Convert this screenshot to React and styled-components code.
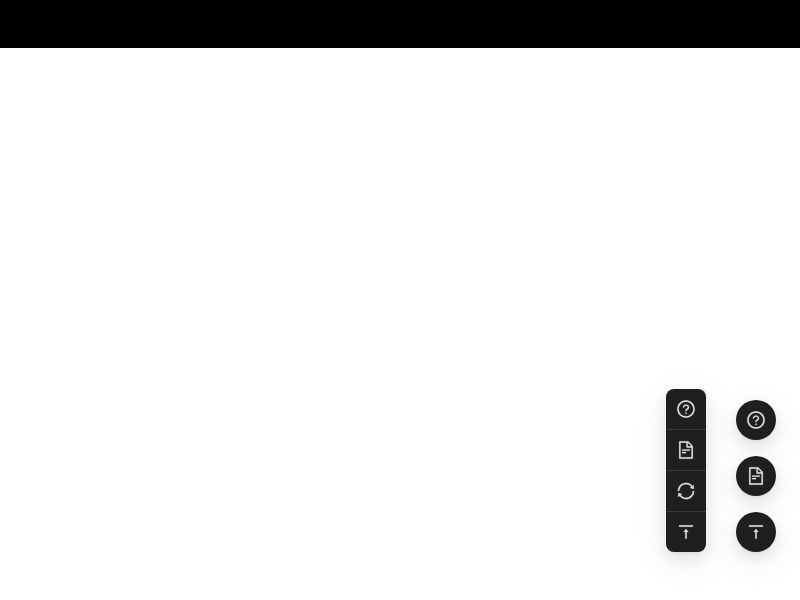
import React from 'react';
import styled, { createGlobalStyle } from 'styled-components';
import { AiOutlineQuestionCircle, AiOutlineFileText, AiOutlineSync, AiOutlineVerticalAlignTop } from 'react-icons/ai';

const Global = createGlobalStyle`
  html, body { margin: 0; padding: 0; background: #fff; font-family: "Liberation Sans", sans-serif; }
  #root { min-height: 100vh; }
`;

const shadow = '0 6px 16px 0 rgba(0,0,0,.08), 0 3px 6px -4px rgba(0,0,0,.12), 0 9px 28px 8px rgba(0,0,0,.05)';

const TopBar = styled.header`
  height: 48px;
  background: #000;
`;

const FloatDock = styled.div`
  position: fixed;
  right: 24px;
  bottom: 48px;
  display: flex;
  align-items: flex-end;
  gap: 30px;
`;

const SquareGroup = styled.div`
  display: flex;
  flex-direction: column;
  width: 40px;
  border-radius: 8px;
  background: #1f1f1f;
  box-shadow: ${shadow};
  overflow: hidden;
`;

const SquareButton = styled.button`
  display: flex;
  align-items: center;
  justify-content: center;
  width: 40px;
  height: 40px;
  padding: 0;
  border: 0;
  background: transparent;
  color: rgba(255,255,255,.85);
  font-size: 20px;
  & + & { border-top: 1px solid rgba(253,253,253,.12); height: 41px; }
  svg { stroke: currentColor; stroke-width: 10; }
`;

const CircleGroup = styled.div`
  display: flex;
  flex-direction: column;
  gap: 16px;
`;

const CircleButton = styled.button`
  display: flex;
  align-items: center;
  justify-content: center;
  width: 40px;
  height: 40px;
  padding: 0;
  border: 0;
  border-radius: 50%;
  background: #1f1f1f;
  color: rgba(255,255,255,.85);
  font-size: 20px;
  box-shadow: ${shadow};
  svg { stroke: currentColor; stroke-width: 10; }
`;

export default function App() {
  return (
    <>
      <Global />
      <TopBar />
      <FloatDock>
        <SquareGroup>
          <SquareButton><AiOutlineQuestionCircle /></SquareButton>
          <SquareButton><AiOutlineFileText /></SquareButton>
          <SquareButton><AiOutlineSync /></SquareButton>
          <SquareButton><AiOutlineVerticalAlignTop /></SquareButton>
        </SquareGroup>
        <CircleGroup>
          <CircleButton><AiOutlineQuestionCircle /></CircleButton>
          <CircleButton><AiOutlineFileText /></CircleButton>
          <CircleButton><AiOutlineVerticalAlignTop /></CircleButton>
        </CircleGroup>
      </FloatDock>
    </>
  );
}
